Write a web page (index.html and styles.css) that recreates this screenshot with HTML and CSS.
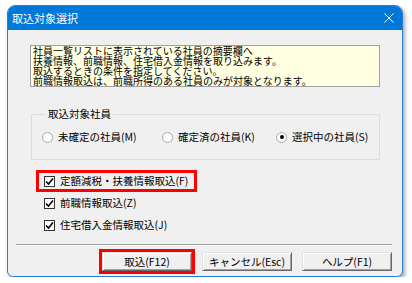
FILE: index.html
```html
<!doctype html>
<html lang="ja">
    <head>
        <meta charset="UTF-8" />
        <title>取込対象選択</title>
        <link rel="stylesheet" href="styles.css">
    </head>
    <body>
        <div class="window">
            <div class="titlebar">
                <span class="title">取込対象選択</span>
                <svg class="close" width="10" height="10" viewBox="0 0 10 10">
                    <path d="M0.5 0.5 L9.5 9.5 M9.5 0.5 L0.5 9.5" stroke="#fff" stroke-width="1" fill="none"/>
                </svg>
            </div>

            <div class="client">
                <div class="info">
                    <div class="line">社員一覧リストに表示されている社員の摘要欄へ</div>
                    <div class="line">扶養情報、前職情報、住宅借入金情報を取り込みます。</div>
                    <div class="line">取込するときの条件を指定してください。</div>
                    <div class="line">前職情報取込は、前職所得のある社員のみが対象となります。</div>
                </div>

                <fieldset class="group">
                    <legend>取込対象社員</legend>
                    <div class="radios">
                        <label class="radio"><span class="dot"></span>未確定の社員(M)</label>
                        <label class="radio"><span class="dot"></span>確定済の社員(K)</label>
                        <label class="radio"><span class="dot on"></span>選択中の社員(S)</label>
                    </div>
                </fieldset>

                <div class="checks">
                    <label class="check marked">
                        <span class="box"><svg width="9" height="9" viewBox="0 0 9 9"><path d="M1 4.5 L3.5 7 L8 1.5" stroke="#000" stroke-width="1.6" fill="none"/></svg></span>
                        定額減税・扶養情報取込(F)
                    </label>
                    <label class="check">
                        <span class="box"><svg width="9" height="9" viewBox="0 0 9 9"><path d="M1 4.5 L3.5 7 L8 1.5" stroke="#000" stroke-width="1.6" fill="none"/></svg></span>
                        前職情報取込(Z)
                    </label>
                    <label class="check">
                        <span class="box"><svg width="9" height="9" viewBox="0 0 9 9"><path d="M1 4.5 L3.5 7 L8 1.5" stroke="#000" stroke-width="1.6" fill="none"/></svg></span>
                        住宅借入金情報取込(J)
                    </label>
                </div>
            </div>

            <div class="footer">
                <div class="separator"></div>
                <div class="buttons">
                    <button type="button" class="btn marked">取込(F12)</button>
                    <button type="button" class="btn">キャンセル(Esc)</button>
                    <button type="button" class="btn">ヘルプ(F1)</button>
                </div>
            </div>
        </div>
    </body>
</html>
```

FILE: styles.css
```css
body {
    margin: 0;
    background-color: #ffffff;
    font-family: "Noto Sans CJK JP", "Noto Sans", sans-serif;
    color: #000;
}
.window {
    box-sizing: border-box;
    width: 396px;
    height: 272px;
    margin: 5px 0 0 7px;
    background-color: #f0f0f0;
    border: 1px solid #2a7fd4;
    border-radius: 8px 8px 6px 6px;
    box-shadow: 2px 3px 4px rgba(0, 0, 0, 0.35);
    display: flex;
    flex-direction: column;
    overflow: hidden;
}
.titlebar {
    height: 24px;
    background-color: #0078d7;
    display: flex;
    align-items: center;
    justify-content: space-between;
    padding: 0 8px 0 4px;
    margin-top: -1px;
    padding-top: 1px;
}
.title {
    color: #fff;
    font-size: 11px;
    line-height: 14px;
}
.close {
    display: block;
    margin-top: -1px;
}
.client {
    padding: 15px 22px 0 22px;
}
.info {
    height: 40px;
    border: 1px solid #a0a0a0;
    background-color: #ffffe1;
    font-size: 10px;
    padding: 0 2px;
    white-space: nowrap;
}
.info .line {
    height: 10px;
    line-height: 10px;
}
.group {
    margin: 20px 0 0 1px;
    padding: 9px 0 15px 10px;
    border: 1px solid #dcdcdc;
    border-radius: 1px;
}
.group legend {
    font-size: 10.5px;
    line-height: 14px;
    padding: 0 2px;
    margin-left: 4px;
}
.radios {
    display: grid;
    grid-template-columns: 120px 114px auto;
    font-size: 10.5px;
    line-height: 14px;
}
.radio {
    display: flex;
    align-items: center;
}
.dot {
    box-sizing: border-box;
    width: 11px;
    height: 11px;
    border: 1px solid #a8a8a8;
    border-radius: 50%;
    background-color: #fff;
    margin-right: 5px;
    display: flex;
    align-items: center;
    justify-content: center;
}
.dot.on::after {
    content: "";
    width: 4px;
    height: 4px;
    border-radius: 50%;
    background-color: #000;
}
.checks {
    margin: 10px 0 0 6px;
    display: flex;
    flex-direction: column;
    align-items: flex-start;
}
.check {
    box-sizing: border-box;
    height: 22px;
    border: 3px solid transparent;
    padding: 0 6px 0 5px;
    display: flex;
    align-items: center;
    font-size: 10.5px;
    line-height: 14px;
}
.check.marked {
    border-color: #ff0000;
}
.box {
    box-sizing: border-box;
    width: 11px;
    height: 11px;
    border: 1px solid #333;
    background-color: #fff;
    margin-right: 5px;
    display: flex;
    align-items: center;
    justify-content: center;
}
.box svg {
    display: block;
}
.footer {
    margin-top: auto;
    padding: 0 0 5px 0;
}
.separator {
    margin: 0 10px 0 8px;
    border-top: 1px solid #a0a0a0;
    border-bottom: 1px solid #ffffff;
}
.buttons {
    display: flex;
    justify-content: flex-end;
    gap: 10px;
    margin-top: 6px;
    padding-right: 10px;
}
.btn {
    box-sizing: border-box;
    width: 90px;
    height: 19px;
    padding: 0;
    font-family: "Noto Sans CJK JP", "Noto Sans", sans-serif;
    font-size: 10.5px;
    line-height: 14px;
    color: #000;
    background-color: #f0f0f0;
    border: 1px solid;
    border-color: #e3e3e3 #696969 #696969 #e3e3e3;
    box-shadow: inset 1px 1px 0 #fff, inset -1px -1px 0 #a0a0a0;
}
.btn.marked {
    outline: 3px solid #ff0000;
}
```
